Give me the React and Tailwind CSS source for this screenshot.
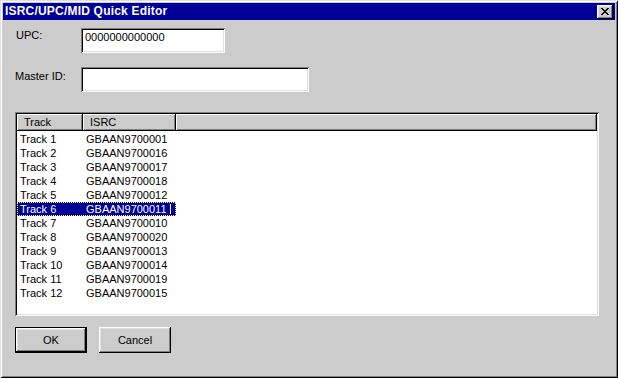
import React from "react";

const tracks = [
  ["Track 1", "GBAAN9700001"],
  ["Track 2", "GBAAN9700016"],
  ["Track 3", "GBAAN9700017"],
  ["Track 4", "GBAAN9700018"],
  ["Track 5", "GBAAN9700012"],
  ["Track 6", "GBAAN9700011"],
  ["Track 7", "GBAAN9700010"],
  ["Track 8", "GBAAN9700020"],
  ["Track 9", "GBAAN9700013"],
  ["Track 10", "GBAAN9700014"],
  ["Track 11", "GBAAN9700019"],
  ["Track 12", "GBAAN9700015"],
];

const sunken =
  "shadow-[inset_1px_1px_#808080,inset_-1px_-1px_#ffffff,inset_2px_2px_#000000,inset_-2px_-2px_#dfdfdf]";
const raised =
  "shadow-[inset_-1px_-1px_#000000,inset_1px_1px_#ffffff,inset_-2px_-2px_#808080,inset_2px_2px_#dfdfdf]";
const headerCell =
  "shadow-[inset_-1px_-1px_#000000,inset_1px_1px_#ffffff,inset_-2px_-2px_#808080]";

export default function App() {
  return (
    <div
      className="w-[618px] h-[378px] bg-[#cccccc] p-[3px] flex flex-col text-black text-[11px] leading-[13px] shadow-[inset_1px_1px_#dfdfdf,inset_-1px_-1px_#000000,inset_2px_2px_#ffffff,inset_-2px_-2px_#808080]"
      style={{ fontFamily: '"Liberation Sans", Arial, sans-serif' }}
    >
      {/* title bar */}
      <div className="h-[17px] bg-[#000099] flex items-center justify-between pl-[2px] pr-[2px]">
        <span className="text-white font-bold text-[12px] tracking-[0.2px]">
          ISRC/UPC/MID Quick Editor
        </span>
        <div className={`w-[16px] h-[14px] bg-[#cccccc] flex items-center justify-center ${raised}`}>
          <svg width="8" height="7" viewBox="0 0 8 7" shapeRendering="crispEdges">
            <path d="M0 0h2v1h-2zM6 0h2v1h-2zM1 1h2v1h-2zM5 1h2v1h-2zM2 2h4v1h-4zM3 3h2v1h-2zM2 4h4v1h-4zM1 5h2v1h-2zM5 5h2v1h-2zM0 6h2v1h-2zM6 6h2v1h-2z" fill="#000" />
          </svg>
        </div>
      </div>

      <div className="flex flex-col pl-[12px] pt-[8px]">
        {/* UPC */}
        <div className="flex items-start">
          <span className="w-[66px] pl-[1px] pt-[1px]">UPC:</span>
          <div className={`w-[144px] h-[25px] bg-white pl-[4px] pt-[3px] ${sunken}`}>
            0000000000000
          </div>
        </div>

        {/* Master ID */}
        <div className="flex items-start mt-[14px]">
          <span className="w-[66px] pt-[3px]">Master ID:</span>
          <div className={`w-[228px] h-[25px] bg-white ${sunken}`} />
        </div>

        {/* list view */}
        <div className={`mt-[20px] w-[584px] h-[204px] bg-white p-[2px] flex flex-col ${sunken}`}>
          <div className="h-[17px] flex bg-[#cccccc] shrink-0">
            <div className={`w-[66px] pl-[7px] flex items-center ${headerCell}`}>Track</div>
            <div className={`w-[93px] pl-[7px] flex items-center ${headerCell}`}>ISRC</div>
            <div className={`flex-1 ${headerCell}`} />
          </div>
          <div className="flex flex-col pt-[1px]">
            {tracks.map(([t, isrc], i) => {
              const sel = i === 5;
              return (
                <div key={t} className="flex h-[14px] leading-[14px]">
                  <div
                    className={`w-[159px] flex relative ${
                      sel ? "bg-[#000099] text-white outline outline-1 outline-dotted outline-[#ffff66] -outline-offset-1" : ""
                    }`}
                  >
                    <span className="w-[69px] pl-[3px]">{t}</span>
                    <span>{isrc}</span>
                    {sel && <span className="absolute left-[153px] top-[2px] w-[1px] h-[10px] bg-white" />}
                  </div>
                </div>
              );
            })}
          </div>
        </div>

        {/* buttons */}
        <div className="flex gap-[12px] mt-[11px]">
          <div className="w-[72px] h-[26px] border border-black">
            <div className={`w-full h-full bg-[#cccccc] flex items-center justify-center ${raised}`}>OK</div>
          </div>
          <div className={`w-[72px] h-[26px] bg-[#cccccc] flex items-center justify-center ${raised}`}>
            Cancel
          </div>
        </div>
      </div>
    </div>
  );
}
